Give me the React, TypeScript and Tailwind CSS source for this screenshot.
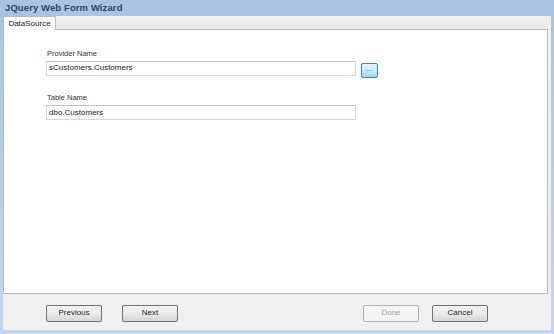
export default function App() {
  return (
    <div className="w-[554px] h-[334px] overflow-hidden flex flex-col bg-gradient-to-b from-[#a8c3e3] to-[#c3d7ee] font-['Liberation_Sans',sans-serif]">
      {/* title bar */}
      <div className="h-[16px] shrink-0 flex items-center pl-[5px]">
        <span className="text-[9.5px] font-bold text-[#34445e] tracking-[0.1px]">JQuery Web Form Wizard</span>
      </div>

      {/* client area */}
      <div className="flex-1 mx-[3px] mb-[4px] bg-[#f0f0f0] flex flex-col">
        {/* tab strip */}
        <div className="h-[14px] shrink-0 flex items-end bg-[#f0f0f0] pr-[3px]">
          <div className="h-[14px] w-[53px] bg-white border border-b-0 border-[#b9b9b9] flex items-center justify-center text-[8px] text-[#222]">
            DataSource
          </div>
          <div className="flex-1 h-[13px] bg-gradient-to-b from-[#f4f4f4] to-[#e9e9e9] border-b border-[#b9b9b9]" />
        </div>

        {/* tab page */}
        <div className="h-[264px] shrink-0 mr-[3px] bg-white border border-t-0 border-[#b9b9b9] flex flex-col pl-[42px] pt-[20px]">
          <div className="text-[7.5px] text-[#333] leading-none mb-[3px] pl-[1px]">Provider Name</div>
          <div className="flex items-start gap-[5px]">
            <div className="w-[310px] h-[15px] border border-[#d5d5d5] border-t-[#c2c2c2] flex items-center px-[2px] text-[8px] text-[#222]">
              sCustomers.Customers
            </div>
            <div className="mt-[2px] w-[17px] h-[15px] rounded-[2px] border border-[#3c7fb1] bg-gradient-to-b from-[#eaf6fd] to-[#a7d9f5] flex items-center justify-center text-[7px] text-[#555] leading-none pb-[3px]">
              ...
            </div>
          </div>

          <div className="text-[7.5px] text-[#333] leading-none mt-[16px] mb-[4px] pl-[1px]">Table Name</div>
          <div className="w-[310px] h-[15px] border border-[#d5d5d5] border-t-[#c2c2c2] flex items-center px-[2px] text-[8px] text-[#222]">
            dbo.Customers
          </div>
        </div>

        {/* buttons */}
        <div className="flex-1 flex items-center pl-[43px] pt-[2px]">
          <button className="w-[56px] h-[17px] rounded-[2px] border border-[#707070] bg-gradient-to-b from-[#f2f2f2] via-[#ebebeb] to-[#d6d6d6] text-[8px] text-[#222]">
            Previous
          </button>
          <button className="ml-[20px] w-[56px] h-[17px] rounded-[2px] border border-[#707070] bg-gradient-to-b from-[#f2f2f2] via-[#ebebeb] to-[#d6d6d6] text-[8px] text-[#222]">
            Next
          </button>
          <button className="ml-[185px] w-[56px] h-[17px] rounded-[2px] border border-[#adb2b5] bg-[#f4f4f4] text-[8px] text-[#a0a0a0]">
            Done
          </button>
          <button className="ml-[13px] w-[56px] h-[17px] rounded-[2px] border border-[#707070] bg-gradient-to-b from-[#f2f2f2] via-[#ebebeb] to-[#d6d6d6] text-[8px] text-[#222]">
            Cancel
          </button>
        </div>
      </div>
    </div>
  );
}
